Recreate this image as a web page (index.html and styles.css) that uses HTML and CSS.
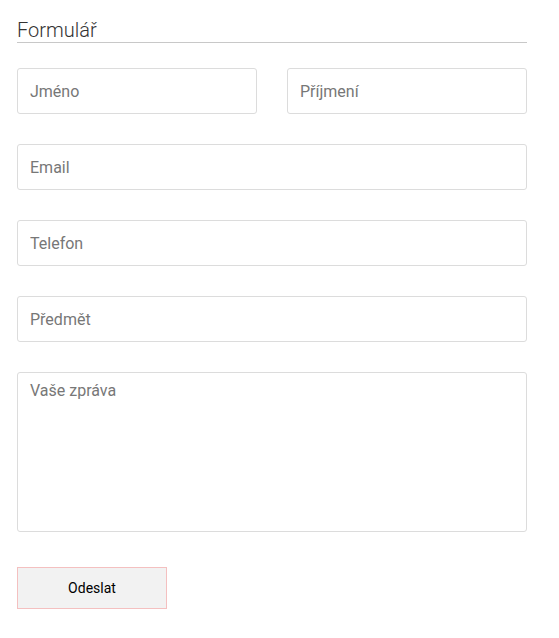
FILE: index.html
```html
<!DOCTYPE html>
<html lang="cs">
<head>
<meta charset="utf-8">
<link rel="stylesheet" href="styles.css">
</head>
<body>
<form class="form">
  <h2 class="form-title">Formulář</h2>
  <div class="row two">
    <input class="field" type="text" placeholder="Jméno">
    <input class="field" type="text" placeholder="Příjmení">
  </div>
  <div class="row">
    <input class="field" type="email" placeholder="Email">
  </div>
  <div class="row">
    <input class="field" type="text" placeholder="Telefon">
  </div>
  <div class="row">
    <input class="field" type="text" placeholder="Předmět">
  </div>
  <div class="row">
    <textarea class="field area" placeholder="Vaše zpráva"></textarea>
  </div>
  <div class="actions">
    <button class="submit" type="button">Odeslat</button>
  </div>
</form>
</body>
</html>
```
FILE: styles.css
```css
* { box-sizing: border-box; }
html, body { margin: 0; background: #fff; }
body { font-family: Roboto, "Liberation Sans", sans-serif; }
.form {
  width: 510px;
  margin: 0 0 0 17px;
  padding-top: 18px;
  display: flex;
  flex-direction: column;
}
.form-title {
  margin: 0 0 25px;
  font-size: 20px;
  font-weight: 300;
  color: #333;
  line-height: 24px;
  border-bottom: 1px solid #c8c8c8;
}
.row {
  display: flex;
  margin-bottom: 30px;
}
.row.two { gap: 30px; }
.field {
  flex: 1;
  min-width: 0;
  height: 46px;
  border: 1px solid #dcdcdc;
  border-radius: 3px;
  padding: 0 12px;
  font-family: Roboto, "Liberation Sans", sans-serif;
  font-size: 16px;
  color: #333;
  background: #fff;
  outline: none;
}
.field::placeholder { color: #777; opacity: 1; }
.area {
  height: 160px;
  padding: 8px 12px;
  resize: none;
  line-height: 19px;
}
.row:last-of-type { margin-bottom: 0; }
.actions { margin-top: 5px; }
.submit {
  width: 150px;
  height: 42px;
  background: #f2f2f2;
  border: 1px solid #f4c0c0;
  border-radius: 0;
  font-family: Roboto, "Liberation Sans", sans-serif;
  font-size: 14px;
  color: #000;
  cursor: pointer;
}
```
